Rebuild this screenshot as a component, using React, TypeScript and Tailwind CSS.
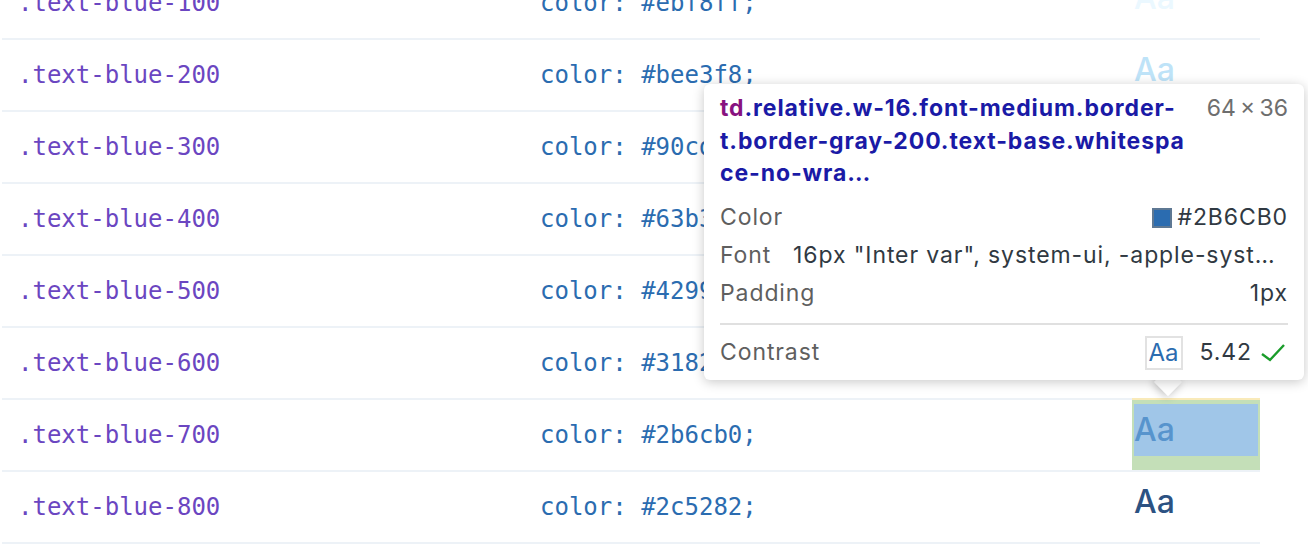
import React from "react";

const rows = [
  { name: ".text-blue-100", value: "color: #ebf8ff;", color: "#ebf8ff" },
  { name: ".text-blue-200", value: "color: #bee3f8;", color: "#bee3f8" },
  { name: ".text-blue-300", value: "color: #90cdf4;", color: "#90cdf4" },
  { name: ".text-blue-400", value: "color: #63b3ed;", color: "#63b3ed" },
  { name: ".text-blue-500", value: "color: #4299e1;", color: "#4299e1" },
  { name: ".text-blue-600", value: "color: #3182ce;", color: "#3182ce" },
  { name: ".text-blue-700", value: "color: #2b6cb0;", color: "#2b6cb0", hl: true },
  { name: ".text-blue-800", value: "color: #2c5282;", color: "#2c5282" },
];

const mono = "font-['DejaVu_Sans_Mono',monospace]";

export default function App() {
  return (
    <div className="relative h-[552px] w-[1308px] overflow-hidden bg-white">
      <div className="-mt-[34px] ml-[2px] w-[1258px]">
        {rows.map((r) => (
          <div key={r.name} className="flex h-[72px] border-t-2 border-[#edf2f7]">
            <div className={`flex w-[538px] items-center pl-[16px] text-[24px] text-[#6b46c1] ${mono}`}>
              {r.name}
            </div>
            <div className={`flex flex-1 items-center text-[24px] text-[#2b6cb0] ${mono}`}>
              {r.value}
            </div>
            <div className="relative w-[128px] px-[2px] pt-[4px] font-['Inter',sans-serif] text-[32px] font-medium leading-[52px]">
              <span style={{ color: r.color }}>Aa</span>
              {r.hl && (
                <div className="absolute inset-x-0 -top-[2px] flex h-[72px] flex-col">
                  <div className="h-[2px] bg-[rgba(255,229,153,0.66)]" />
                  <div className="flex-1 border-x-2 border-t-[4px] border-b-[14px] border-[rgba(147,196,125,0.55)] bg-[rgba(111,168,220,0.66)] bg-clip-padding" />
                </div>
              )}
            </div>
          </div>
        ))}
        <div className="border-t-2 border-[#edf2f7]" />
      </div>

      {/* Tooltip arrow */}
      <div className="absolute left-[1158px] top-[372px] h-[20px] w-[20px] rotate-45 bg-white shadow-[0_2px_8px_rgba(0,0,0,0.25)]" />
      {/* Tooltip */}
      <div className="absolute left-[704px] top-[84px] h-[296px] w-[600px] rounded-[6px] bg-white px-[16px] pt-[8px] font-['Inter',sans-serif] text-[23px] tracking-[0.9px] shadow-[0_2px_12px_rgba(0,0,0,0.22)]">
        <div className="flex justify-between">
          <div className="font-bold leading-[32.5px] text-[#1a1aa6]">
            <div>
              <span className="text-[#881280]">td</span>.relative.w-16.font-medium.border-
            </div>
            <div>t.border-gray-200.text-base.whitespa</div>
            <div>ce-no-wra…</div>
          </div>
          <div className="leading-[32.5px] tracking-normal text-[#6e6e6e]">64{"\u2009"}×{"\u2009"}36</div>
        </div>
        <div className="mt-[9px]">
          <div className="flex h-[38px] items-center justify-between">
            <span className="text-[#5f5f5f]">Color</span>
            <span className="flex items-center gap-[5px] text-[#303942]">
              <span className="inline-block h-[20px] w-[20px] border-2 border-[rgba(128,128,128,0.6)] bg-[#2b6cb0]" />
              #2B6CB0
            </span>
          </div>
          <div className="flex h-[38px] items-center">
            <span className="w-[73px] text-[#5f5f5f]">Font</span>
            <span className="text-[#303942]">16px "Inter var", system-ui, -apple-syst…</span>
          </div>
          <div className="flex h-[38px] items-center justify-between">
            <span className="text-[#5f5f5f]">Padding</span>
            <span className="text-[#303942]">1px</span>
          </div>
        </div>
        <div className="mt-[10px] h-[2px] bg-[#e0e0e0]" />
        <div className="mt-[9px] flex h-[38px] items-center justify-between">
          <span className="text-[#5f5f5f]">Contrast</span>
          <span className="flex items-center pr-[3px]">
            <span className="flex h-[34px] w-[38px] items-center justify-center border-2 border-[#e2e2e2] text-[24px] tracking-normal text-[#2b6cb0]">
              Aa
            </span>
            <span className="ml-[17px] text-[#303942]">5.42</span>
            <svg className="ml-[9px]" width="24" height="20" viewBox="0 0 24 20" fill="none">
              <polyline points="1,11 9,17 23,2" stroke="#1a9c2a" strokeWidth="2.4" strokeLinejoin="miter" />
            </svg>
          </span>
        </div>
      </div>
    </div>
  );
}
